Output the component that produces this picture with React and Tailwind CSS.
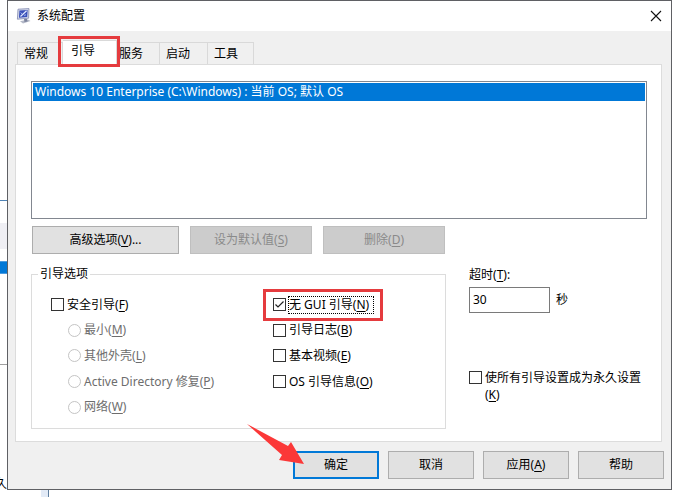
import React, { useState } from 'react';
import { clsx } from 'clsx';

const tabs = [
  { id: 'general', label: '常规', width: 'w-[46px]' },
  { id: 'boot', label: '引导', width: 'w-[54px]' },
  { id: 'services', label: '服务', width: 'w-[43px]' },
  { id: 'startup', label: '启动', width: 'w-[48px]' },
  { id: 'tools', label: '工具', width: 'w-[46px]' },
];

const safeBootModes = [
  { id: 'minimal', label: '最小', hotkey: 'M' },
  { id: 'shell', label: '其他外壳', hotkey: 'L' },
  { id: 'ad', label: 'Active Directory 修复', hotkey: 'P' },
  { id: 'network', label: '网络', hotkey: 'W' },
];

const bootFlags = [
  { id: 'noGui', label: '无 GUI 引导', hotkey: 'N' },
  { id: 'bootLog', label: '引导日志', hotkey: 'B' },
  { id: 'baseVideo', label: '基本视频', hotkey: 'E' },
  { id: 'osInfo', label: 'OS 引导信息', hotkey: 'O' },
];

const Caption = ({ text, hotkey, suffix = '' }) => (
  <>
    {text}
    {hotkey && (
      <>
        (<span className="underline underline-offset-2">{hotkey}</span>)
      </>
    )}
    {suffix}
  </>
);

const Highlight = ({ className }) => (
  <span className={clsx('pointer-events-none absolute z-10 border-[3px] border-[#e53b3e]', className)} />
);

const CheckBox = ({ label, hotkey, focused, multiline, className, ...props }) => (
  <label className={clsx('flex gap-[3px]', multiline ? 'items-start leading-[17px]' : 'items-center', className)}>
    <span className={clsx('relative flex h-[13px] w-[13px] shrink-0', multiline && 'mt-[2px]')}>
      <input
        type="checkbox"
        className="peer h-[13px] w-[13px] appearance-none border border-[#333333] bg-white outline-none"
        {...props}
      />
      <svg
        viewBox="0 0 13 13"
        className="pointer-events-none absolute inset-0 hidden h-[13px] w-[13px] peer-checked:block"
      >
        <path d="M2.5 6.5 5 9 10.5 3.5" fill="none" stroke="#222" strokeWidth="1.2" />
      </svg>
    </span>
    <span className={clsx(focused && 'pr-1 outline-1 outline-dotted outline-black')}>
      <Caption text={label} hotkey={hotkey} />
    </span>
  </label>
);

const Button = ({ className, primary, children, ...props }) => (
  <button
    className={clsx(
      'h-7 border bg-[#e1e1e1] disabled:border-[#bfbfbf] disabled:bg-[#cccccc] disabled:text-[#8a8a8a]',
      primary ? 'border-2 border-[#0078d7]' : 'border-[#adadad]',
      className
    )}
    {...props}
  >
    {children}
  </button>
);

const AppIcon = () => (
  <svg viewBox="0 0 16 16" className="h-4 w-4">
    <path d="M4 13.2 12 11.5 14.5 13 7 15.6Z" fill="#b4b9c8" />
    <path d="M8 11h3l.5 2.5-3 .5z" fill="#7b829c" />
    <path d="M2 1.2 13 .6 12.6 10.2 1.4 11.2Z" fill="#d3d8ea" stroke="#8088ae" strokeWidth=".8" />
    <path d="M3.4 2.6 11.6 2.1 11.2 9 3 9.8Z" fill="#3a4fb8" />
    <path d="M4.5 8.5 10.6 2.8" fill="none" stroke="#e4ebff" strokeWidth="1.2" />
    <path d="m4.6 4.6 1.6 1.4M8 7.4l2-.6" fill="none" stroke="#9db4f2" strokeWidth="1" />
  </svg>
);

const App = () => {
  const [activeTab, setActiveTab] = useState('boot');
  const [safeBoot, setSafeBoot] = useState(false);
  const [flags, setFlags] = useState({ noGui: true });
  const [timeout, setTimeoutValue] = useState('30');
  const [permanent, setPermanent] = useState(false);

  return (
    <div className="flex min-h-screen overflow-hidden bg-white font-['Noto_Sans','Noto_Sans_CJK_SC',sans-serif] text-xs leading-4 text-black">
      {/* Window behind */}
      <div className="flex w-[7px] shrink-0 flex-col">
        <div className="h-[200px]" />
        <div className="h-px bg-[#4f83b5]" />
        <div className="h-[22px]" />
        <div className="h-[26px] bg-[#efeff4]" />
        <div className="h-3" />
        <div className="h-[13px] border-y border-[#4a9be0] bg-[#0078d7]" />
        <div className="h-[90px]" />
        <div className="h-px bg-[#a0a0a0]" />
        <div className="h-[111px]" />
        <span className="flex w-[7px] justify-end whitespace-nowrap">久</span>
      </div>

      <div className="flex min-w-0 flex-1 flex-col">
        <main className="flex flex-col border border-[#5f6064] bg-[#f0f0f0]">
          {/* Title bar */}
          <header className="flex h-[30px] items-center bg-white pr-[7px] pl-2">
            <AppIcon />
            <h1 className="ml-[5px] flex-1">系统配置</h1>
            <button aria-label="关闭" className="flex h-4 w-4 items-center justify-center">
              <svg viewBox="0 0 12 12" className="h-3 w-3">
                <path d="m1 1 10 10M11 1 1 11" stroke="#111" strokeWidth="1.1" />
              </svg>
            </button>
          </header>

          {/* Tabs */}
          <nav className="flex h-[33px] items-end pl-[9px]">
            {tabs.map((tab) => {
              const active = tab.id === activeTab;
              return (
                <div key={tab.id} className={clsx('relative flex', tab.width)}>
                  <button
                    onClick={() => setActiveTab(tab.id)}
                    className={clsx(
                      'flex-1 border-t border-r border-[#d9d9d9] text-left',
                      active ? 'z-[1] h-6 bg-white pb-1 pl-2' : 'h-[22px]',
                      !active && (tab.id === 'services' ? 'pl-[2px]' : 'pl-[6px]'),
                      tab.id === 'general' && 'border-l'
                    )}
                  >
                    {tab.label}
                  </button>
                  {active && <Highlight className="-top-1 right-[-3px] -bottom-[3px] left-[-5px]" />}
                </div>
              );
            })}
          </nav>

          {/* Boot page */}
          <section className="mr-[9px] ml-[7px] border border-[#dcdcdc] bg-white px-[15px] pt-4 pb-3">
            <ul className="mr-[-1px] h-[138px] border border-[#828790] p-px">
              <li className="h-[18px] bg-[#0078d7] pl-[2px] leading-[18px] text-white">
                Windows 10 Enterprise (C:\Windows) : 当前 OS; 默认 OS
              </li>
            </ul>

            <div className="mt-[7px] ml-px flex gap-[11px]">
              <Button className="w-[147px]">
                <Caption text="高级选项" hotkey="V" suffix="..." />
              </Button>
              <Button className="w-[122px]" disabled>
                <Caption text="设为默认值" hotkey="S" />
              </Button>
              <Button className="w-[122px]" disabled>
                <Caption text="删除" hotkey="D" />
              </Button>
            </div>

            <div className="mt-3 flex">
              <fieldset className="h-[163px] w-[415px] border border-[#dcdcdc] pl-[19px]">
                <legend className="-ml-[13px] px-[2px]">引导选项</legend>
                <div className="mt-[10px] grid grid-cols-[222px_1fr]">
                  <div className="grid h-[128px] grid-rows-5 items-center">
                    <CheckBox
                      label="安全引导"
                      hotkey="F"
                      checked={safeBoot}
                      onChange={(e) => setSafeBoot(e.target.checked)}
                    />
                    {safeBootModes.map((mode) => (
                      <label key={mode.id} className="ml-[17px] flex items-center gap-[3px] text-[#6d6d6d]">
                        <input
                          type="radio"
                          name="safe-boot-mode"
                          disabled={!safeBoot}
                          className="h-[13px] w-[13px] appearance-none rounded-full border border-[#c4c4c4] bg-white checked:border-4"
                        />
                        <span>
                          <Caption text={mode.label} hotkey={mode.hotkey} />
                        </span>
                      </label>
                    ))}
                  </div>
                  <div className="grid h-[128px] grid-rows-5 items-center justify-start">
                    {bootFlags.map((flag) => (
                      <div key={flag.id} className="relative justify-self-start">
                        <CheckBox
                          label={flag.label}
                          hotkey={flag.hotkey}
                          focused={flag.id === 'noGui'}
                          checked={!!flags[flag.id]}
                          onChange={(e) => setFlags({ ...flags, [flag.id]: e.target.checked })}
                        />
                        {flag.id === 'noGui' && <Highlight className="-inset-x-[10px] -inset-y-2" />}
                      </div>
                    ))}
                  </div>
                </div>
              </fieldset>

              <div className="ml-[23px] flex-1 pt-px">
                <label htmlFor="timeout" className="block">
                  <Caption text="超时" hotkey="T" suffix=":" />
                </label>
                <div className="mt-1 flex items-center gap-[6px]">
                  <input
                    id="timeout"
                    value={timeout}
                    onChange={(e) => setTimeoutValue(e.target.value)}
                    className="h-[26px] w-[81px] border border-[#7a7a7a] bg-white pb-[2px] pl-[3px] outline-none"
                  />
                  <span>秒</span>
                </div>
                <CheckBox
                  multiline
                  label="使所有引导设置成为永久设置"
                  hotkey="K"
                  className="mt-14 w-[176px]"
                  checked={permanent}
                  onChange={(e) => setPermanent(e.target.checked)}
                />
              </div>
            </div>
          </section>

          {/* Dialog buttons */}
          <footer className="flex justify-end gap-[9px] pt-[9px] pr-[7px] pb-[10px]">
            <div className="relative">
              <Button primary className="w-[86px]">
                确定
              </Button>
              <svg
                viewBox="0 0 58 42"
                className="pointer-events-none absolute -top-7 -left-[46px] h-[42px] w-[58px]"
              >
                <path d="M0 1 41 23 44 19 57 41 32 37 35 32Z" fill="#fb3838" />
              </svg>
            </div>
            <Button className="w-[86px]">取消</Button>
            <Button className="w-[86px]">
              <Caption text="应用" hotkey="A" />
            </Button>
            <Button className="w-[86px]">帮助</Button>
          </footer>
        </main>
        <div className="ml-[34px] w-2 flex-1 border-r border-[#5f7f9f] bg-[#e3ebf7]" />
      </div>
      <div className="w-[7px] shrink-0" />
    </div>
  );
};

export default App;
